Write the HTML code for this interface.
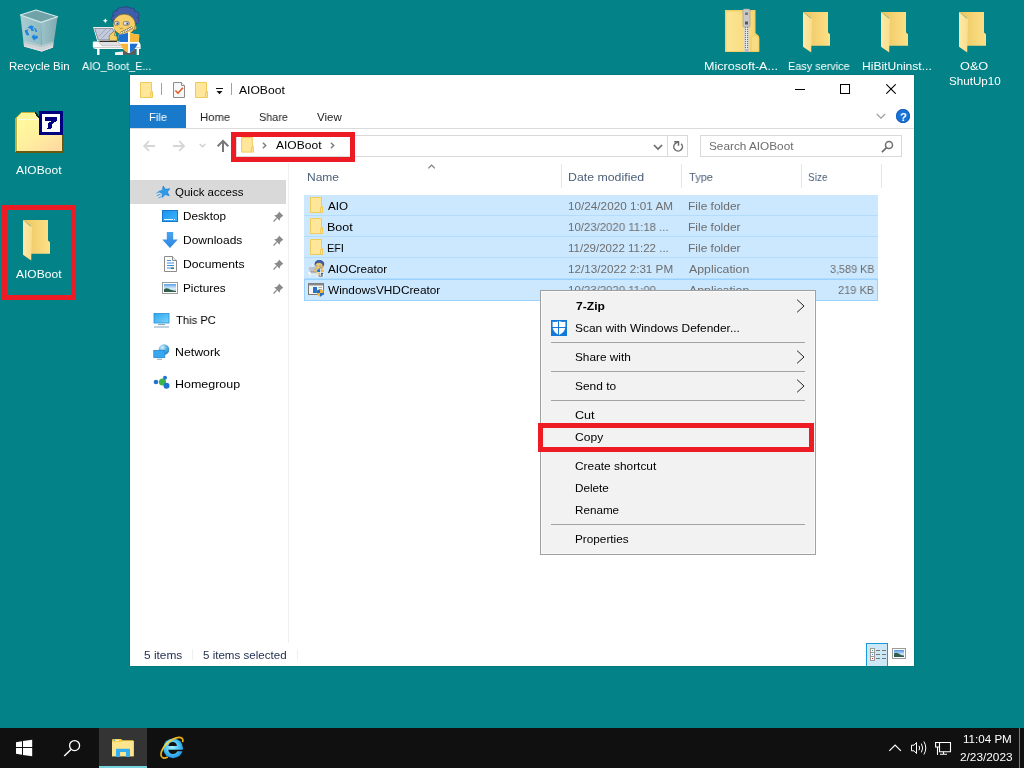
<!DOCTYPE html>
<html lang="en"><head><meta charset="utf-8"><title>AIOBoot</title>
<style>
html,body{margin:0;padding:0}body{width:1024px;height:768px;overflow:hidden;position:relative;background:#038387;font-family:"Liberation Sans", Arial, sans-serif;font-size:11.5px}
.a{position:absolute;box-sizing:content-box;display:block}
.t{position:absolute;white-space:nowrap;line-height:16px;height:16px;transform-origin:0 0;display:block;will-change:transform}
</style></head>
<body>
<svg class="a" style="left:14px;top:6px" width="50" height="50" viewBox="14 6 50 50">
<defs><linearGradient id="rb1" x1="0" x2="1"><stop offset="0" stop-color="#a9cdd3"/><stop offset="1" stop-color="#8fb9c0"/></linearGradient>
<linearGradient id="rb2" x1="0" x2="1"><stop offset="0" stop-color="#9cc3c9"/><stop offset="1" stop-color="#7fa9b0"/></linearGradient></defs>
<path d="M20.3,15L41,22.4L41.7,51.6L24,46.4Z" fill="url(#rb1)"/>
<path d="M41,22.4L57.6,16.7L53,47.4L41.7,51.6Z" fill="url(#rb2)"/>
<path d="M20.3,15L36,10L57.6,16.7L41,22.4Z" fill="#6fa3a8"/>
<path d="M23.7,42.5L41.6,47L53.4,43.5L53,47.4L41.7,51.6L24,46.4Z" fill="#cfd4d7"/>
<path d="M23.5,40.5L41.5,45 53.6,41.5 53.4,43.5 41.6,47 23.7,42.5Z" fill="#bccdd1" opacity=".8"/>
<path d="M24,45.4L41.7,50.5 53,46.6 53,47.4 41.7,51.6 24,46.4Z" fill="#e8e0e0"/>
<path d="M20.3,15L36,10L57.6,16.7L41,22.4Z" fill="none" stroke="#d4e8ea" stroke-width="1.2" stroke-linejoin="round"/>
<g fill="#1d84e2"><path d="M27.5,27.5l3.5-2.3 3.2,1.6-1.6,1.2 1.5,2.6-2.4,.6-1.2-2.4z"/><path d="M25.2,30l3.4-.4-1,1.6 1.8,3.8-2.6,.6-2-4.2z"/><path d="M31.5,36.5l3-2.2 .2,1.6 2.8-.4 .4,2.6-3.4,1.6-.2,1.4z"/><path d="M33.5,27.5l2.6,1.2 1,3.4-1.6-.2-.6-2.2z"/></g>
</svg>
<span class="t" style="left:8.91px;top:58.0px;color:#fff;font-size:11.5px;transform:scaleX(0.9932);">Recycle Bin</span>
<svg class="a" style="left:92px;top:6px" width="50.0" height="50.0" viewBox="92 6 50 50">
<g fill="#3f5ea8" stroke="#2b3f7c" stroke-width=".7"><circle cx="125.400" cy="18.500" r="11.800"/><circle cx="116.500" cy="14.200" r="3.800"/><circle cx="120.500" cy="11" r="3.400"/><circle cx="126" cy="10.300" r="3.300"/><circle cx="131.500" cy="11.600" r="3.600"/><circle cx="135.500" cy="15" r="3.600"/><circle cx="136" cy="20.500" r="3.200"/><circle cx="114.500" cy="18.500" r="3"/></g>
<circle cx="125.400" cy="18.800" r="11.200" fill="#3f5ea8"/>
<ellipse cx="134.600" cy="27.500" rx="1.900" ry="2.600" fill="#f5cf68" stroke="#6a5520" stroke-width=".5"/>
<ellipse cx="124.200" cy="24.600" rx="11.200" ry="10.500" fill="#f5cf68" stroke="#5a4a1c" stroke-width=".6"/>
<path d="M114,15.500C117,12.500 121,12 125,13 129,12.500 132,14 134.500,17 131,15.500 128,16.500 125,16 121,16.500 117,15.500 114,15.500Z" fill="#3f5ea8" opacity="0"/>
<rect x="114.600" y="21.600" width="4.300" height="3.500" rx=".8" fill="#e4e6ee" stroke="#4a4a55" stroke-width=".6"/><rect x="123.400" y="21.600" width="5.600" height="3.500" rx=".8" fill="#e4e6ee" stroke="#4a4a55" stroke-width=".6"/>
<rect x="116.600" y="22.600" width="1.600" height="2" fill="#4a5570"/><rect x="126.400" y="22.600" width="1.800" height="2" fill="#4a5570"/>
<path d="M119.500,27.500C120.500,29 122,29 122.800,27.800" fill="none" stroke="#7a6020" stroke-width=".6"/>
<path d="M121,33.200L132.400,27.400" stroke="#6a5a2a" stroke-width="2.600"/><path d="M121.300,33L132.200,27.500" stroke="#fff" stroke-width="1.600" stroke-dasharray="1.300 .5"/>
<path d="M93.900,27.600H113.200L116.700,40.200L97.700,40.600Z" fill="#c3cadd" stroke="#fff" stroke-width="1.200" stroke-linejoin="round"/>
<path d="M94.600,28.300H112.700L116,39.700L98.200,40Z" fill="none" stroke="#555" stroke-width=".6"/>
<path d="M98.500,36.500L106.500,28.500M101.500,38.500L111.500,28.500" stroke="#8e97ad" stroke-width=".7"/>
<path d="M92.800,42.500Q92.800,41.600 94,41.600H138.500Q140.600,43 140.600,45.500V49H96Q92.800,49 92.800,46Z" fill="#fff"/>
<path d="M98,40.800H117.500L121.500,45.800H102Z" fill="#dfe1e6" stroke="#9a9a9a" stroke-width=".5"/><path d="M99.500,41.400H117" stroke="#222" stroke-width="1.100"/>
<path d="M93.200,47.600H140.400" stroke="#bdbdbd" stroke-width=".8"/>
<rect x="97" y="49" width="2.500" height="6" fill="#fff"/><rect x="136.700" y="49" width="2.300" height="6" fill="#fff"/>
<rect x="123" y="49" width="12" height="5.600" fill="#5a5a5a"/><path d="M115,52.200L123,51.600V55H115Z" fill="#f2f2f2"/>
<path d="M109.300,39.500C108.600,36.500 109.500,34.300 111.600,33.400L113.400,31.600C114.600,31.200 115.400,32 115,33.400L114.300,35.200 117.300,36.500V40.800H110.500Z" fill="#f5cf68" stroke="#6a5520" stroke-width=".6"/>
<path d="M105.300,18.200l.8,1.700 1.700,.8-1.700,.8-.8,1.700-.8-1.700-1.700-.8 1.700-.8z" fill="#fff"/>
<path d="M128.900,32.100c3.400,2 6.900,2.500 10.300,2.300 .2,8.200-2.800,15-10.300,18.800-7.500-3.800-10.500-10.600-10.300-18.800 3.400,.2 6.900-.3 10.300-2.300z" fill="#fff"/>
<clipPath id="shd"><path d="M128.900,32.100c3.400,2 6.900,2.500 10.300,2.300 .2,8.200-2.800,15-10.300,18.800-7.500-3.800-10.500-10.600-10.300-18.800 3.400,.2 6.900-.3 10.300-2.300z"/></clipPath>
<g clip-path="url(#shd)"><rect x="118" y="31" width="10" height="11" fill="#1f6fd0"/><rect x="130" y="31" width="11" height="11" fill="#f9b73a"/><rect x="118" y="43.700" width="10" height="11" fill="#f9b73a"/><rect x="130" y="43.700" width="11" height="11" fill="#1f6fd0"/></g>
</svg>
<span class="t" style="left:82.3px;top:58.0px;color:#fff;font-size:11.5px;transform:scaleX(0.9452);">AIO_Boot_E...</span>
<svg class="a" style="left:14px;top:110px" width="50" height="44" viewBox="14 110 50 44" shape-rendering="crispEdges">
<defs><linearGradient id="z7" x1="0" y1="0" x2="1" y2="1"><stop offset="0" stop-color="#fffa9e"/><stop offset=".45" stop-color="#fff09e"/><stop offset="1" stop-color="#ffd6a2"/></linearGradient></defs>
<path d="M16,118L21.500,112.500H35.500L39,118H63V152H16Z" fill="#fff69c"/>
<path d="M17.500,120H63V151H17.500Z" fill="url(#z7)"/>
<path d="M16,152V118L21.500,112.500H35.500" fill="none" stroke="#c4ae3c" stroke-width="1.400"/>
<path d="M35,112.500L39,117.500" stroke="#222" stroke-width="1.600"/>
<path d="M16,152H63V135" fill="none" stroke="#6a5a10" stroke-width="1.400"/>
<path d="M17.500,150V119.500H39" fill="none" stroke="#fffde0" stroke-width="1.200"/>
<rect x="39" y="111" width="24" height="24" fill="#000080"/><rect x="42" y="114" width="18" height="18" fill="#fff"/>
<path d="M45,117H57V120.500L52.500,123.500L51.500,128.500H47.500L48.500,123L52,120.500H45Z" fill="#000080"/>
</svg>
<span class="t" style="left:16.3px;top:162.0px;color:#fff;font-size:11.5px;transform:scaleX(1.0465);">AIOBoot</span>
<svg class="a" style="left:23px;top:220px" width="28" height="42" viewBox="0 0 28 42">
<defs><linearGradient id="fb23220" x1="0" x2="1" y1="0" y2="0"><stop offset="0" stop-color="#e9c25c"/><stop offset=".35" stop-color="#f2cf6e"/><stop offset="1" stop-color="#fde187"/></linearGradient>
<linearGradient id="ff23220" x1="0" x2="1" y1="0" y2="0"><stop offset="0" stop-color="#fdeaa9"/><stop offset="1" stop-color="#f9dd8a"/></linearGradient></defs>
<path d="M0,0H25V20.5L27,22.3V33.7H8V6Z" fill="url(#fb23220)"/>
<path d="M0,0L9,7.3L8.2,40.4L0,34.7Z" fill="url(#ff23220)"/></svg>
<span class="t" style="left:16.3px;top:266.0px;color:#fff;font-size:11.5px;transform:scaleX(1.0465);">AIOBoot</span>
<div class="a" style="left:2px;top:205px;width:64px;height:85px;border:5px solid #ed1c24"></div>
<svg class="a" style="left:724px;top:8px" width="37" height="46" viewBox="724 8 37 46">
<defs><linearGradient id="zf" x1="0" x2="1"><stop offset="0" stop-color="#fbe596"/><stop offset="1" stop-color="#f7d877"/></linearGradient></defs>
<path d="M725,10H755.500V33L759,36V52H725Z" fill="#f3cf68"/>
<path d="M726.500,11.500H754V51H726.500Z" fill="url(#zf)"/>
<path d="M751,37.500L754.500,34.500L759,37.500V51.500H751Z" fill="#f8dc82" stroke="#eec65a" stroke-width=".8"/>
<rect x="744.200" y="23" width="4.600" height="29" fill="#d8d8d8"/>
<path d="M746.500,23V52" stroke="#777" stroke-width="3.200" stroke-dasharray="1 1"/>
<path d="M746.500,23V52" stroke="#e6e6e6" stroke-width="1"/>
<rect x="743" y="9" width="7" height="18" rx="1.200" fill="#c9c9c9" stroke="#999" stroke-width=".6"/>
<rect x="745" y="12.500" width="3" height="2.500" fill="#777"/><rect x="745" y="21.500" width="3" height="3" fill="#555"/>
<rect x="745" y="49" width="3.500" height="3" fill="#bbb"/>
</svg>
<span class="t" style="left:703.81px;top:58.0px;color:#fff;font-size:11.5px;transform:scaleX(1.0909);">Microsoft-A...</span>
<svg class="a" style="left:803px;top:12px" width="28" height="42" viewBox="0 0 28 42">
<defs><linearGradient id="fb80312" x1="0" x2="1" y1="0" y2="0"><stop offset="0" stop-color="#e9c25c"/><stop offset=".35" stop-color="#f2cf6e"/><stop offset="1" stop-color="#fde187"/></linearGradient>
<linearGradient id="ff80312" x1="0" x2="1" y1="0" y2="0"><stop offset="0" stop-color="#fdeaa9"/><stop offset="1" stop-color="#f9dd8a"/></linearGradient></defs>
<path d="M0,0H25V20.5L27,22.3V33.7H8V6Z" fill="url(#fb80312)"/>
<path d="M0,0L9,7.3L8.2,40.4L0,34.7Z" fill="url(#ff80312)"/></svg>
<span class="t" style="left:787.85px;top:58.0px;color:#fff;font-size:11.5px;transform:scaleX(0.9453);">Easy service</span>
<svg class="a" style="left:881px;top:12px" width="28" height="42" viewBox="0 0 28 42">
<defs><linearGradient id="fb88112" x1="0" x2="1" y1="0" y2="0"><stop offset="0" stop-color="#e9c25c"/><stop offset=".35" stop-color="#f2cf6e"/><stop offset="1" stop-color="#fde187"/></linearGradient>
<linearGradient id="ff88112" x1="0" x2="1" y1="0" y2="0"><stop offset="0" stop-color="#fdeaa9"/><stop offset="1" stop-color="#f9dd8a"/></linearGradient></defs>
<path d="M0,0H25V20.5L27,22.3V33.7H8V6Z" fill="url(#fb88112)"/>
<path d="M0,0L9,7.3L8.2,40.4L0,34.7Z" fill="url(#ff88112)"/></svg>
<span class="t" style="left:861.75px;top:58.0px;color:#fff;font-size:11.5px;transform:scaleX(1.0492);">HiBitUninst...</span>
<svg class="a" style="left:959px;top:12px" width="28" height="42" viewBox="0 0 28 42">
<defs><linearGradient id="fb95912" x1="0" x2="1" y1="0" y2="0"><stop offset="0" stop-color="#e9c25c"/><stop offset=".35" stop-color="#f2cf6e"/><stop offset="1" stop-color="#fde187"/></linearGradient>
<linearGradient id="ff95912" x1="0" x2="1" y1="0" y2="0"><stop offset="0" stop-color="#fdeaa9"/><stop offset="1" stop-color="#f9dd8a"/></linearGradient></defs>
<path d="M0,0H25V20.5L27,22.3V33.7H8V6Z" fill="url(#fb95912)"/>
<path d="M0,0L9,7.3L8.2,40.4L0,34.7Z" fill="url(#ff95912)"/></svg>
<span class="t" style="left:959.7px;top:58.0px;color:#fff;font-size:11.5px;transform:scaleX(1.1042);">O&amp;O</span>
<span class="t" style="left:948.69px;top:73.0px;color:#fff;font-size:11.5px;transform:scaleX(1.0120);">ShutUp10</span>
<div class="a" style="left:130px;top:75px;width:784px;height:591px;background:#fff;box-shadow:0 0 0 1px rgba(0,40,40,.10)"></div>
<svg class="a" style="left:140px;top:81.5px" width="13" height="16" viewBox="0 0 13 16">
<path d="M0.5,0.5H11.5V9.5H12.5V15.5H0.5Z" fill="#ffe69a" stroke="#f1cb5a"/><path d="M10.5,15V10.5H12" fill="none" stroke="#f1cb5a"/></svg>
<div class="a" style="left:161px;top:83px;width:1px;height:12px;background:#a0a0a0"></div>
<svg class="a" style="left:173px;top:82px" width="13" height="16" viewBox="0 0 13 16">
<path d="M0.500,0.500H8.500L11.500,3.500V15.500H0.500Z" fill="#f6f7f8" stroke="#8c8c8c"/><path d="M8.500,0.500V3.500H11.500" fill="#fff" stroke="#8c8c8c"/>
<path d="M2.400,8.500L5,11.200L9.900,5.800" fill="none" stroke="#e8541c" stroke-width="1.500"/></svg>
<svg class="a" style="left:195px;top:82px" width="13" height="16" viewBox="0 0 13 16">
<path d="M0.5,0.5H11.5V9.5H12.5V15.5H0.5Z" fill="#ffe69a" stroke="#f1cb5a"/><path d="M10.5,15V10.5H12" fill="none" stroke="#f1cb5a"/></svg>
<div class="a" style="left:216px;top:88px;width:7px;height:1px;background:#111"></div>
<svg class="a" style="left:216px;top:91px" width="7" height="4" viewBox="0 0 7 4"><path d="M0.500,0H6.500L3.500,3.300Z" fill="#111"/></svg>
<div class="a" style="left:231px;top:83px;width:1px;height:12px;background:#a0a0a0"></div>
<span class="t" style="left:238.9px;top:82.0px;color:#000;font-size:11.5px;transform:scaleX(1.0535);">AIOBoot</span>
<div class="a" style="left:795px;top:89px;width:10px;height:1px;background:#000"></div>
<div class="a" style="left:840px;top:84px;width:8px;height:8px;border:1px solid #000"></div>
<svg class="a" style="left:886px;top:84px" width="10" height="10" viewBox="0 0 10 10"><path d="M0.300,0.300L9.700,9.700M9.700,0.300L0.300,9.700" stroke="#000" stroke-width="1.100"/></svg>
<div class="a" style="left:130px;top:105px;width:56px;height:23px;background:#1979ca"></div>
<span class="t" style="left:148.83px;top:109.0px;color:#fff;font-size:11.5px;transform:scaleX(0.9706);">File</span>
<span class="t" style="left:200.02px;top:109.0px;color:#222;font-size:11.5px;transform:scaleX(0.9828);">Home</span>
<span class="t" style="left:259.26px;top:109.0px;color:#222;font-size:11.5px;transform:scaleX(0.9414);">Share</span>
<span class="t" style="left:317.3px;top:109.0px;color:#222;font-size:11.5px;transform:scaleX(1.0000);">View</span>
<div class="a" style="left:130px;top:128px;width:784px;height:1px;background:#dadbdc"></div>
<svg class="a" style="left:876px;top:113px" width="10" height="7" viewBox="0 0 10 7"><path d="M0.800,1L5,5.200L9.200,1" fill="none" stroke="#9a9a9a" stroke-width="1.100"/></svg>
<div class="a" style="left:896px;top:109px;width:14px;height:14px;border-radius:7px;background:#1a73d9;box-shadow:inset 0 0 0 1px #1560b8"></div>
<span class="t" style="left:900.14px;top:109.0px;color:#fff;font-size:11.5px;font-weight:bold;transform:scaleX(0.9600);">?</span>
<svg class="a" style="left:142px;top:139px" width="90" height="14" viewBox="142 139 90 14" fill="none">
<path d="M155,146H144.200M149,141.200L144.200,146L149,150.800" stroke="#d6d6d6" stroke-width="1.800"/>
<path d="M173,146H184M179.200,141.200L184,146L179.200,150.800" stroke="#d6d6d6" stroke-width="1.800"/>
<path d="M199.700,144L202.500,146.800L205.300,144" stroke="#cfcfcf" stroke-width="1.400"/>
<path d="M223,152V141.300M217.700,146.200L223,140.900L228.300,146.200" stroke="#787878" stroke-width="2"/>
</svg>
<div class="a" style="left:236px;top:135px;width:450px;height:20px;border:1px solid #d9d9d9"></div>
<div class="a" style="left:667px;top:136px;width:1px;height:20px;background:#d9d9d9"></div>
<svg class="a" style="left:241px;top:137px" width="13" height="15.6" viewBox="0 0 13 16">
<path d="M0.5,0.5H11.5V9.5H12.5V15.5H0.5Z" fill="#ffe69a" stroke="#f1cb5a"/><path d="M10.5,15V10.5H12" fill="none" stroke="#f1cb5a"/></svg>
<svg class="a" style="left:262px;top:142px" width="5" height="7" viewBox="0 0 5 7"><path d="M0.900,0.700L3.700,3.500L0.900,6.300" fill="none" stroke="#808080" stroke-width="1.500"/></svg>
<span class="t" style="left:276.3px;top:137.0px;color:#000;font-size:11.5px;transform:scaleX(1.0465);">AIOBoot</span>
<svg class="a" style="left:330px;top:142px" width="5" height="7" viewBox="0 0 5 7"><path d="M0.900,0.700L3.700,3.500L0.900,6.300" fill="none" stroke="#808080" stroke-width="1.500"/></svg>
<svg class="a" style="left:653px;top:144px" width="10" height="7" viewBox="0 0 10 7"><path d="M0.900,1L5,5L9.100,1" fill="none" stroke="#6b6b6b" stroke-width="1.700"/></svg>
<svg class="a" style="left:671px;top:139px" width="14" height="14" viewBox="671 139 14 14" fill="none"><path d="M681.200,143.700A4.300,4.300 0 1 1 675,143.700L677.800,141.900" stroke="#6b6b6b" stroke-width="1.500"/><path d="M674.200,141.700H678.500V145.700" stroke="#6b6b6b" stroke-width="1.500"/></svg>
<div class="a" style="left:700px;top:135px;width:200px;height:20px;border:1px solid #d9d9d9"></div>
<span class="t" style="left:708.78px;top:138.0px;color:#6d6d6d;font-size:11.5px;transform:scaleX(1.0247);">Search AIOBoot</span>
<svg class="a" style="left:880px;top:139px" width="15" height="15" viewBox="880 139 15 15" fill="none"><circle cx="889" cy="145" r="3.500" stroke="#6f6f6f" stroke-width="1.500"/><path d="M886.500,147.700L882,152.200" stroke="#6f6f6f" stroke-width="1.700"/></svg>
<div class="a" style="left:231px;top:132px;width:114px;height:20px;border:5px solid #ed1c24"></div>
<div class="a" style="left:130px;top:180px;width:156px;height:24px;background:#d9d9d9"></div>
<div class="a" style="left:288px;top:163px;width:1px;height:480px;background:#f0f0f0"></div>
<svg class="a" style="left:155px;top:184px" width="17" height="16" viewBox="155 184 17 16">
<g transform="rotate(-14 164.5 192)"><path d="M164.6,185.800L166.200,189.700L170.400,190L167.200,192.700L168.200,196.800L164.600,194.600L161,196.800L162,192.700L158.800,190L163,189.700Z" fill="#2d9bea" stroke="#1b7fd0" stroke-width=".6"/></g>
<path d="M156.400,193.200L160,191.600M156.800,195.800L160.600,194M158.600,198L161.600,196.400" stroke="#3aa2ee" stroke-width="1"/></svg>
<span class="t" style="left:175.0px;top:184.0px;color:#000;font-size:11.5px;transform:scaleX(0.9970);">Quick access</span>
<svg class="a" style="left:162px;top:210px" width="16" height="12" viewBox="0 0 16 12"><defs><linearGradient id="dk" x1="0" y1="0" x2="1" y2="1"><stop offset="0" stop-color="#1a94ee"/><stop offset="1" stop-color="#3cb4fa"/></linearGradient></defs>
<rect x="0.500" y="0.500" width="15" height="11" fill="url(#dk)" stroke="#1478d2"/><path d="M2,9.500H14" stroke="#e8f4ff" stroke-width="1" stroke-dasharray="9 1 1 1"/></svg>
<span class="t" style="left:182.88px;top:208.0px;color:#000;font-size:11.5px;transform:scaleX(1.0195);">Desktop</span>
<svg class="a" style="left:162px;top:231px" width="16" height="18" viewBox="162 231 16 18"><defs><linearGradient id="dl" x1="0" y1="0" x2="0" y2="1"><stop offset="0" stop-color="#4aa4f0"/><stop offset="1" stop-color="#2a86e0"/></linearGradient></defs><path d="M166.800,232H173.200V239.500H177.800L170,248L162.200,239.500H166.800Z" fill="url(#dl)"/></svg>
<span class="t" style="left:182.86px;top:232.0px;color:#000;font-size:11.5px;transform:scaleX(1.0429);">Downloads</span>
<svg class="a" style="left:164px;top:256px" width="13" height="16" viewBox="0 0 13 16"><path d="M0.500,0.500H8.500L12.500,4.500V15.500H0.500Z" fill="#fff" stroke="#8c8c8c"/><path d="M8.500,0.500V4.500H12.500" fill="#eee" stroke="#8c8c8c"/>
<path d="M3,4.500H7M3,7H10M3,9.500H10M3,12H10" stroke="#3f8fde" stroke-width="1"/><path d="M7,11.500H10V13H7Z" fill="#3a8a5a"/></svg>
<span class="t" style="left:182.84px;top:256.0px;color:#000;font-size:11.5px;transform:scaleX(1.0579);">Documents</span>
<svg class="a" style="left:162px;top:282px" width="16" height="12" viewBox="0 0 16 12"><defs><linearGradient id="pc" x1="0" y1="0" x2="0" y2="1"><stop offset="0" stop-color="#5aa0e8"/><stop offset=".55" stop-color="#d8ecf8"/><stop offset="1" stop-color="#a8c8d8"/></linearGradient></defs>
<rect x="0.500" y="0.500" width="15" height="11" fill="#fff" stroke="#9a9a9a"/><rect x="2" y="2" width="12" height="8" fill="url(#pc)"/><path d="M2,10V7.200C4,5.500 6,6 8,7.500 10,8.500 12,8.500 14,9V10Z" fill="#2f5f4a"/></svg>
<span class="t" style="left:182.88px;top:280.0px;color:#000;font-size:11.5px;transform:scaleX(1.0250);">Pictures</span>
<svg class="a" style="left:273px;top:211px" width="11" height="11" viewBox="0 0 11 11"><path d="M6,0.500L10.500,5L9.300,5.300L7,7.600L6.700,9.800L1.200,4.300L3.400,4L5.700,1.700Z" fill="#8a8a8a"/><path d="M3.800,7.200L0.500,10.500" stroke="#8a8a8a" stroke-width="1.200"/></svg>
<svg class="a" style="left:273px;top:235px" width="11" height="11" viewBox="0 0 11 11"><path d="M6,0.500L10.500,5L9.300,5.300L7,7.600L6.700,9.800L1.200,4.300L3.400,4L5.700,1.700Z" fill="#8a8a8a"/><path d="M3.800,7.200L0.500,10.500" stroke="#8a8a8a" stroke-width="1.200"/></svg>
<svg class="a" style="left:273px;top:259px" width="11" height="11" viewBox="0 0 11 11"><path d="M6,0.500L10.500,5L9.300,5.300L7,7.600L6.700,9.800L1.200,4.300L3.400,4L5.700,1.700Z" fill="#8a8a8a"/><path d="M3.800,7.200L0.500,10.500" stroke="#8a8a8a" stroke-width="1.200"/></svg>
<svg class="a" style="left:273px;top:283px" width="11" height="11" viewBox="0 0 11 11"><path d="M6,0.500L10.500,5L9.300,5.300L7,7.600L6.700,9.800L1.200,4.300L3.400,4L5.700,1.700Z" fill="#8a8a8a"/><path d="M3.800,7.200L0.500,10.500" stroke="#8a8a8a" stroke-width="1.200"/></svg>
<svg class="a" style="left:153px;top:313px" width="17" height="15" viewBox="0 0 17 15"><defs><linearGradient id="tp" x1="0" y1="0" x2="1" y2="1"><stop offset="0" stop-color="#2ea6f0"/><stop offset="1" stop-color="#7ad4fa"/></linearGradient></defs>
<rect x="1" y="0.500" width="15" height="9.500" fill="url(#tp)" stroke="#2290dc" stroke-width=".8"/><path d="M5,11.500H12" stroke="#8aa8bc" stroke-width="1.200"/><path d="M1,14H16" stroke="#9ab4c6" stroke-width="1.200"/></svg>
<span class="t" style="left:175.7px;top:312.0px;color:#000;font-size:11.5px;transform:scaleX(0.9750);">This PC</span>
<svg class="a" style="left:153px;top:344px" width="17" height="16" viewBox="0 0 17 16"><defs><radialGradient id="gl" cx=".35" cy=".3" r=".8"><stop offset="0" stop-color="#d8f0fa"/><stop offset=".5" stop-color="#5ab0e0"/><stop offset="1" stop-color="#2a78c0"/></radialGradient></defs>
<circle cx="11" cy="5.500" r="5.300" fill="url(#gl)"/><rect x="0.800" y="6.500" width="11" height="7" fill="#36a8f0" stroke="#2088d4" stroke-width=".8"/><path d="M4,15.200H9" stroke="#8aa8bc" stroke-width="1.100"/></svg>
<span class="t" style="left:174.63px;top:344.0px;color:#000;font-size:11.5px;transform:scaleX(1.0732);">Network</span>
<svg class="a" style="left:153px;top:375px" width="17" height="15" viewBox="0 0 17 15"><circle cx="3" cy="7" r="2.300" fill="#1f74d0"/><circle cx="9.500" cy="7" r="3.600" fill="#3cb44a"/><circle cx="12" cy="2.800" r="2" fill="#1f74d0"/><circle cx="13.500" cy="10.800" r="3" fill="#1f74d0"/></svg>
<span class="t" style="left:174.62px;top:376.0px;color:#000;font-size:11.5px;transform:scaleX(1.0847);">Homegroup</span>
<div class="a" style="left:561px;top:164px;width:1px;height:24px;background:#e5e5e5"></div>
<div class="a" style="left:681px;top:164px;width:1px;height:24px;background:#e5e5e5"></div>
<div class="a" style="left:801px;top:164px;width:1px;height:24px;background:#e5e5e5"></div>
<div class="a" style="left:881px;top:164px;width:1px;height:24px;background:#e5e5e5"></div>
<svg class="a" style="left:427px;top:163px" width="10" height="7" viewBox="427 163 10 7"><path d="M428.4,168.4L431.6,165.2L434.8,168.4" fill="none" stroke="#7a7a7a" stroke-width="1.2"/></svg>
<span class="t" style="left:306.86px;top:169.0px;color:#4c607a;font-size:11.5px;transform:scaleX(1.0448);">Name</span>
<span class="t" style="left:567.73px;top:169.0px;color:#4c607a;font-size:11.5px;transform:scaleX(1.0725);">Date modified</span>
<span class="t" style="left:688.9px;top:169.0px;color:#4c607a;font-size:11.5px;transform:scaleX(0.9600);">Type</span>
<span class="t" style="left:807.93px;top:169.0px;color:#4c607a;font-size:11.5px;transform:scaleX(0.8714);">Size</span>
<div class="a" style="left:304px;top:195px;width:574px;height:21px;background:#cce8ff;box-shadow:inset 0 -1px 0 #b4dcfc"></div>
<span class="t" style="left:328.3px;top:198.0px;color:#000;font-size:11.5px;transform:scaleX(1.0105);">AIO</span>
<span class="t" style="left:567.58px;top:198.0px;color:#6d6d6d;font-size:11.5px;transform:scaleX(1.0198);">10/24/2020 1:01 AM</span>
<span class="t" style="left:687.86px;top:198.0px;color:#6d6d6d;font-size:11.5px;transform:scaleX(1.0408);">File folder</span>
<div class="a" style="left:304px;top:216px;width:574px;height:21px;background:#cce8ff;box-shadow:inset 0 -1px 0 #b4dcfc"></div>
<span class="t" style="left:327.21px;top:219.0px;color:#000;font-size:11.5px;transform:scaleX(1.0870);">Boot</span>
<span class="t" style="left:567.61px;top:219.0px;color:#6d6d6d;font-size:11.5px;transform:scaleX(0.9920);">10/23/2020 11:18 ...</span>
<span class="t" style="left:687.86px;top:219.0px;color:#6d6d6d;font-size:11.5px;transform:scaleX(1.0408);">File folder</span>
<div class="a" style="left:304px;top:237px;width:574px;height:21px;background:#cce8ff;box-shadow:inset 0 -1px 0 #b4dcfc"></div>
<span class="t" style="left:327.36px;top:240.0px;color:#000;font-size:11.5px;transform:scaleX(0.9375);">EFI</span>
<span class="t" style="left:567.6px;top:240.0px;color:#6d6d6d;font-size:11.5px;transform:scaleX(1.0020);">11/29/2022 11:22 ...</span>
<span class="t" style="left:687.86px;top:240.0px;color:#6d6d6d;font-size:11.5px;transform:scaleX(1.0408);">File folder</span>
<div class="a" style="left:304px;top:258px;width:574px;height:21px;background:#cce8ff;box-shadow:inset 0 -1px 0 #b4dcfc"></div>
<span class="t" style="left:328.3px;top:261.0px;color:#000;font-size:11.5px;transform:scaleX(1.0172);">AIOCreator</span>
<span class="t" style="left:567.59px;top:261.0px;color:#6d6d6d;font-size:11.5px;transform:scaleX(1.0147);">12/13/2022 2:31 PM</span>
<span class="t" style="left:688.9px;top:261.0px;color:#6d6d6d;font-size:11.5px;transform:scaleX(1.0714);">Application</span>
<span class="t" style="left:829.66px;top:261.0px;color:#6d6d6d;font-size:11.5px;transform:scaleX(0.9391);">3,589 KB</span>
<div class="a" style="left:304px;top:279px;width:572px;height:20px;background:#cce8ff;border:1px solid #99d1ff"></div>
<span class="t" style="left:328.3px;top:282.0px;color:#000;font-size:11.5px;transform:scaleX(1.0275);">WindowsVHDCreator</span>
<span class="t" style="left:567.61px;top:282.0px;color:#6d6d6d;font-size:11.5px;transform:scaleX(0.9920);">10/23/2020 11:00 ...</span>
<span class="t" style="left:688.9px;top:282.0px;color:#6d6d6d;font-size:11.5px;transform:scaleX(1.0714);">Application</span>
<span class="t" style="left:838.34px;top:282.0px;color:#6d6d6d;font-size:11.5px;transform:scaleX(0.9583);">219 KB</span>
<svg class="a" style="left:310px;top:197px" width="13" height="16" viewBox="0 0 13 16">
<path d="M0.5,0.5H11.5V9.5H12.5V15.5H0.5Z" fill="#ffe69a" stroke="#f1cb5a"/><path d="M10.5,15V10.5H12" fill="none" stroke="#f1cb5a"/></svg>
<svg class="a" style="left:310px;top:218px" width="13" height="16" viewBox="0 0 13 16">
<path d="M0.5,0.5H11.5V9.5H12.5V15.5H0.5Z" fill="#ffe69a" stroke="#f1cb5a"/><path d="M10.5,15V10.5H12" fill="none" stroke="#f1cb5a"/></svg>
<svg class="a" style="left:310px;top:239px" width="13" height="16" viewBox="0 0 13 16">
<path d="M0.5,0.5H11.5V9.5H12.5V15.5H0.5Z" fill="#ffe69a" stroke="#f1cb5a"/><path d="M10.5,15V10.5H12" fill="none" stroke="#f1cb5a"/></svg>
<svg class="a" style="left:307.5px;top:259.5px" width="17.0" height="17.0" viewBox="92 6 50 50">
<g fill="#3f5ea8" stroke="#2b3f7c" stroke-width=".7"><circle cx="125.400" cy="18.500" r="11.800"/><circle cx="116.500" cy="14.200" r="3.800"/><circle cx="120.500" cy="11" r="3.400"/><circle cx="126" cy="10.300" r="3.300"/><circle cx="131.500" cy="11.600" r="3.600"/><circle cx="135.500" cy="15" r="3.600"/><circle cx="136" cy="20.500" r="3.200"/><circle cx="114.500" cy="18.500" r="3"/></g>
<circle cx="125.400" cy="18.800" r="11.200" fill="#3f5ea8"/>
<ellipse cx="134.600" cy="27.500" rx="1.900" ry="2.600" fill="#f5cf68" stroke="#6a5520" stroke-width=".5"/>
<ellipse cx="124.200" cy="24.600" rx="11.200" ry="10.500" fill="#f5cf68" stroke="#5a4a1c" stroke-width=".6"/>
<path d="M114,15.500C117,12.500 121,12 125,13 129,12.500 132,14 134.500,17 131,15.500 128,16.500 125,16 121,16.500 117,15.500 114,15.500Z" fill="#3f5ea8" opacity="0"/>
<rect x="114.600" y="21.600" width="4.300" height="3.500" rx=".8" fill="#e4e6ee" stroke="#4a4a55" stroke-width=".6"/><rect x="123.400" y="21.600" width="5.600" height="3.500" rx=".8" fill="#e4e6ee" stroke="#4a4a55" stroke-width=".6"/>
<rect x="116.600" y="22.600" width="1.600" height="2" fill="#4a5570"/><rect x="126.400" y="22.600" width="1.800" height="2" fill="#4a5570"/>
<path d="M119.500,27.500C120.500,29 122,29 122.800,27.800" fill="none" stroke="#7a6020" stroke-width=".6"/>
<path d="M121,33.200L132.400,27.400" stroke="#6a5a2a" stroke-width="2.600"/><path d="M121.300,33L132.200,27.500" stroke="#fff" stroke-width="1.600" stroke-dasharray="1.300 .5"/>
<path d="M93.900,27.600H113.200L116.700,40.200L97.700,40.600Z" fill="#c3cadd" stroke="#fff" stroke-width="1.200" stroke-linejoin="round"/>
<path d="M94.600,28.300H112.700L116,39.700L98.200,40Z" fill="none" stroke="#555" stroke-width=".6"/>
<path d="M98.500,36.500L106.500,28.500M101.500,38.500L111.500,28.500" stroke="#8e97ad" stroke-width=".7"/>
<path d="M92.800,42.500Q92.800,41.600 94,41.600H138.500Q140.600,43 140.600,45.500V49H96Q92.800,49 92.800,46Z" fill="#fff"/>
<path d="M98,40.800H117.500L121.500,45.800H102Z" fill="#dfe1e6" stroke="#9a9a9a" stroke-width=".5"/><path d="M99.500,41.400H117" stroke="#222" stroke-width="1.100"/>
<path d="M93.200,47.600H140.400" stroke="#bdbdbd" stroke-width=".8"/>
<rect x="97" y="49" width="2.500" height="6" fill="#fff"/><rect x="136.700" y="49" width="2.300" height="6" fill="#fff"/>
<rect x="123" y="49" width="12" height="5.600" fill="#5a5a5a"/><path d="M115,52.200L123,51.600V55H115Z" fill="#f2f2f2"/>
<path d="M109.300,39.500C108.600,36.500 109.500,34.300 111.600,33.400L113.400,31.600C114.600,31.200 115.400,32 115,33.400L114.300,35.200 117.300,36.500V40.800H110.500Z" fill="#f5cf68" stroke="#6a5520" stroke-width=".6"/>
<path d="M105.300,18.200l.8,1.700 1.700,.8-1.700,.8-.8,1.700-.8-1.700-1.700-.8 1.700-.8z" fill="#fff"/>
<path d="M128.900,32.100c3.400,2 6.900,2.500 10.300,2.300 .2,8.200-2.800,15-10.300,18.800-7.500-3.800-10.500-10.600-10.300-18.800 3.400,.2 6.900-.3 10.300-2.300z" fill="#fff"/>
<clipPath id="shs"><path d="M128.900,32.100c3.400,2 6.900,2.500 10.300,2.300 .2,8.200-2.800,15-10.300,18.800-7.500-3.800-10.500-10.600-10.300-18.800 3.400,.2 6.900-.3 10.300-2.300z"/></clipPath>
<g clip-path="url(#shs)"><rect x="118" y="31" width="10" height="11" fill="#1f6fd0"/><rect x="130" y="31" width="11" height="11" fill="#f9b73a"/><rect x="118" y="43.700" width="10" height="11" fill="#f9b73a"/><rect x="130" y="43.700" width="11" height="11" fill="#1f6fd0"/></g>
</svg>
<svg class="a" style="left:308px;top:283px" width="16" height="14" viewBox="0 0 16 14">
<rect x="0.500" y="0.500" width="15" height="11" fill="#f4f4f4" stroke="#777"/><rect x="0.500" y="0.500" width="15" height="2" fill="#8a8a8a"/><rect x="5" y="4" width="4" height="6" fill="#1f74d0"/><path d="M10.500,4.500H14M10.500,6.500H14" stroke="#999" stroke-width=".8"/>
<path d="M12,6.500c1.200,.7 2.400,.8 3.600,.7 0,3-1,5.300-3.600,6.500-2.600-1.200-3.600-3.500-3.600-6.500 1.200,.1 2.400,0 3.600-.7z" fill="#f7b52c"/><path d="M12,6.500V10H8.500C8.400,9 8.400,8 8.400,7.200 9.600,7.300 10.800,7.200 12,6.500zM12,10h3.500c-.4,1.600-1.500,2.900-3.500,3.700z" fill="#1f6fd0"/></svg>
<span class="t" style="left:143.87px;top:647.0px;color:#1e2b4d;font-size:11.5px;transform:scaleX(1.0333);">5 items</span>
<span class="t" style="left:203.09px;top:647.0px;color:#1e2b4d;font-size:11.5px;transform:scaleX(1.0061);">5 items selected</span>
<div class="a" style="left:192px;top:649px;width:1px;height:11px;background:#f0f0f0"></div>
<div class="a" style="left:297px;top:649px;width:1px;height:11px;background:#f0f0f0"></div>
<div class="a" style="left:866px;top:643px;width:20px;height:22px;background:#cce8f6;border:1px solid #1a98dc;border-bottom:0"></div>
<svg class="a" style="left:870px;top:648px" width="16" height="13" viewBox="0 0 16 13"><rect x="0.500" y="0.500" width="4" height="12" fill="#fff" stroke="#9a9a9a"/><path d="M0.500,4.500H4.500M0.500,8.500H4.500" stroke="#9a9a9a"/>
<rect x="2" y="2" width="1" height="1" fill="#3a6"/><rect x="2" y="6" width="1" height="1" fill="#48f"/><rect x="2" y="10" width="1" height="1" fill="#d22"/>
<path d="M6,2.500H10M12,2.500H16M6,6.500H10M12,6.500H16M6,10.500H10M12,10.500H16" stroke="#777" stroke-width="1"/></svg>
<svg class="a" style="left:892px;top:648px" width="14" height="11" viewBox="0 0 14 11"><defs><linearGradient id="lv" x1="0" y1="0" x2="0" y2="1"><stop offset="0" stop-color="#4a90e8"/><stop offset=".6" stop-color="#cfe6f6"/><stop offset="1" stop-color="#8ab"/></linearGradient></defs>
<rect x="0.500" y="0.500" width="13" height="10" fill="#fff" stroke="#9a9a9a"/><rect x="2" y="2" width="10" height="7" fill="url(#lv)"/><path d="M2,9V5.500C4,4 6,5 8,6.500 10,7.500 11,7.500 12,7.800V9Z" fill="#2f5f4a"/></svg>
<div class="a" style="left:540px;top:290px;width:274px;height:263px;background:#f2f2f2;border:1px solid #a0a0a0;box-shadow:inset 0 0 0 1px #f9f9f9"></div>
<div class="a" style="left:551px;top:342px;width:254px;height:1px;background:#a2a2a2"></div>
<div class="a" style="left:551px;top:371px;width:254px;height:1px;background:#a2a2a2"></div>
<div class="a" style="left:551px;top:400px;width:254px;height:1px;background:#a2a2a2"></div>
<div class="a" style="left:551px;top:451px;width:254px;height:1px;background:#a2a2a2"></div>
<div class="a" style="left:551px;top:524px;width:254px;height:1px;background:#a2a2a2"></div>
<svg class="a" style="left:796px;top:298.6px" width="10" height="14" viewBox="0 0 10 14"><path d="M1.100,0.700L8,7L1.100,13.300" fill="none" stroke="#222" stroke-width="1"/></svg>
<svg class="a" style="left:796px;top:349.6px" width="10" height="14" viewBox="0 0 10 14"><path d="M1.100,0.700L8,7L1.100,13.300" fill="none" stroke="#222" stroke-width="1"/></svg>
<svg class="a" style="left:796px;top:378.6px" width="10" height="14" viewBox="0 0 10 14"><path d="M1.100,0.700L8,7L1.100,13.300" fill="none" stroke="#222" stroke-width="1"/></svg>
<span class="t" style="left:575.7px;top:298.0px;color:#000;font-size:11.5px;font-weight:bold;transform:scaleX(1.0519);">7-Zip</span>
<svg class="a" style="left:551px;top:320px" width="16" height="16" viewBox="0 0 16 16"><rect width="16" height="16" fill="#1279d8"/><path d="M1.600,1.800Q5,2.300 8,1.100Q11,2.300 14.400,1.800V6.500C14.400,10.500 11.500,13.500 8,15C4.500,13.500 1.600,10.500 1.600,6.500Z" fill="#fff"/><path d="M7,0.500H8V15.500H7ZM1,7H15V8H1Z" fill="#1279d8"/></svg>
<span class="t" style="left:574.66px;top:320.0px;color:#000;font-size:11.5px;transform:scaleX(1.0357);">Scan with Windows Defender...</span>
<span class="t" style="left:574.67px;top:349.0px;color:#000;font-size:11.5px;transform:scaleX(1.0264);">Share with</span>
<span class="t" style="left:574.66px;top:378.0px;color:#000;font-size:11.5px;transform:scaleX(1.0368);">Send to</span>
<span class="t" style="left:574.61px;top:407.0px;color:#000;font-size:11.5px;transform:scaleX(1.0941);">Cut</span>
<span class="t" style="left:574.65px;top:429.0px;color:#000;font-size:11.5px;transform:scaleX(1.0500);">Copy</span>
<span class="t" style="left:574.67px;top:458.0px;color:#000;font-size:11.5px;transform:scaleX(1.0333);">Create shortcut</span>
<span class="t" style="left:574.68px;top:480.0px;color:#000;font-size:11.5px;transform:scaleX(1.0188);">Delete</span>
<span class="t" style="left:574.69px;top:502.0px;color:#000;font-size:11.5px;transform:scaleX(1.0143);">Rename</span>
<span class="t" style="left:574.68px;top:531.0px;color:#000;font-size:11.5px;transform:scaleX(1.0235);">Properties</span>
<div class="a" style="left:538px;top:423px;width:266px;height:19px;border:5px solid #ed1c24"></div>
<div class="a" style="left:0;top:728px;width:1024px;height:40px;background:#101010"></div>
<div class="a" style="left:99px;top:728px;width:48px;height:40px;background:#343434"></div>
<div class="a" style="left:99px;top:766px;width:48px;height:2px;background:#76d2dc"></div>
<svg class="a" style="left:16px;top:739px" width="17" height="18" viewBox="16 739 17 18"><path d="M16,742.200L22,741.300V747H16ZM23,741.100L32.200,739.700V747H23ZM16,748H22V754.700L16,753.800ZM23,748H32.200V756.300L23,754.900Z" fill="#fff"/></svg>
<svg class="a" style="left:63px;top:738px" width="19" height="20" viewBox="0 0 19 20" fill="none"><circle cx="11.600" cy="7.600" r="5" stroke="#fff" stroke-width="1.300"/><path d="M8,11.400L1.200,18" stroke="#fff" stroke-width="1.400"/></svg>
<svg class="a" style="left:112px;top:738px" width="22" height="20" viewBox="0 0 22 20">
<path d="M0,2.200Q0,1 1.200,1H9.200L10.400,2.200H20.600Q21.700,2.200 21.700,3.300V18.200H0Z" fill="#f5c93c"/><path d="M0,3.700H9.800L10.800,2.900H21.700V18.200H0Z" fill="#fde58e"/>
<path d="M2.600,2.300H7.200" stroke="#fff3c0" stroke-width="1.200"/><circle cx="2.500" cy="2.300" r=".8" fill="#38b0e8"/>
<path d="M4,19V11.500Q4,10.700 4.800,10.700H17.200Q18,10.700 18,11.500V19H14V14H8.100V19Z" fill="#36aef0"/></svg>
<svg class="a" style="left:158px;top:734px" width="28" height="28" viewBox="158 734 28 28"><defs><radialGradient id="ie" cx=".45" cy=".42" r=".62"><stop offset="0" stop-color="#a6f2ff"/><stop offset=".55" stop-color="#4cc4f6"/><stop offset="1" stop-color="#1b8ee0"/></radialGradient>
<linearGradient id="ier" x1="0" y1="1" x2="1" y2="0"><stop offset="0" stop-color="#e8a80c"/><stop offset=".5" stop-color="#ffd83a"/><stop offset="1" stop-color="#e8a80c"/></linearGradient></defs>
<circle cx="173.100" cy="748.300" r="9.900" fill="url(#ie)"/>
<path d="M168.400,745.900C168.700,743.400 170.400,741.900 172.700,741.900C175,741.900 176.700,743.400 176.900,745.900Z" fill="#101010"/>
<path d="M168.200,749.700H183.500V751.300H177.300C176.700,752.900 175.100,753.900 172.800,753.900C170.300,753.900 168.600,752.300 168.200,749.700Z" fill="#101010"/>
<path d="M182.700,741.500C184,737.600 179.500,735.800 173.200,738.900C166,742.500 160.600,750.200 161,755.200C161.300,758.200 164.200,758.700 167.200,757.300" fill="none" stroke="url(#ier)" stroke-width="1.700" stroke-linecap="round"/>
</svg>
<svg class="a" style="left:888px;top:743px" width="14" height="9" viewBox="888 743 14 9"><path d="M889.300,750.900L895.100,745.100L900.900,750.900" fill="none" stroke="#fff" stroke-width="1.200"/></svg>
<svg class="a" style="left:910px;top:740px" width="19" height="16" viewBox="910 740 19 16" fill="none" stroke="#fff" stroke-width="1">
<path d="M911.500,745.200H914L916.500,742.500V753.500L914,750.800H911.500Z"/><path d="M919,745.800Q920.400,748 919,750.200"/><path d="M921.400,743.600Q924,748 921.400,752.400"/><path d="M923.900,741.500Q927.700,748 923.900,754.500"/></svg>
<svg class="a" style="left:934px;top:741px" width="18" height="15" viewBox="934 741 18 15" fill="none" stroke="#fff" stroke-width="1.100">
<path d="M939.500,742.500H950.500V751.700H939.500V747"/><path d="M935.600,742.500H939.500V747H935.600Z"/><path d="M937.500,747V754.900"/><path d="M943.500,751.700V754.300M940,754.300H947"/></svg>
<span class="t" style="left:962.89px;top:731.0px;color:#fff;font-size:11.5px;transform:scaleX(1.0085);">11:04 PM</span>
<span class="t" style="left:960.27px;top:749.0px;color:#fff;font-size:11.5px;transform:scaleX(1.0280);">2/23/2023</span>
<div class="a" style="left:1019px;top:728px;width:1px;height:40px;background:#777"></div>
</body></html>
